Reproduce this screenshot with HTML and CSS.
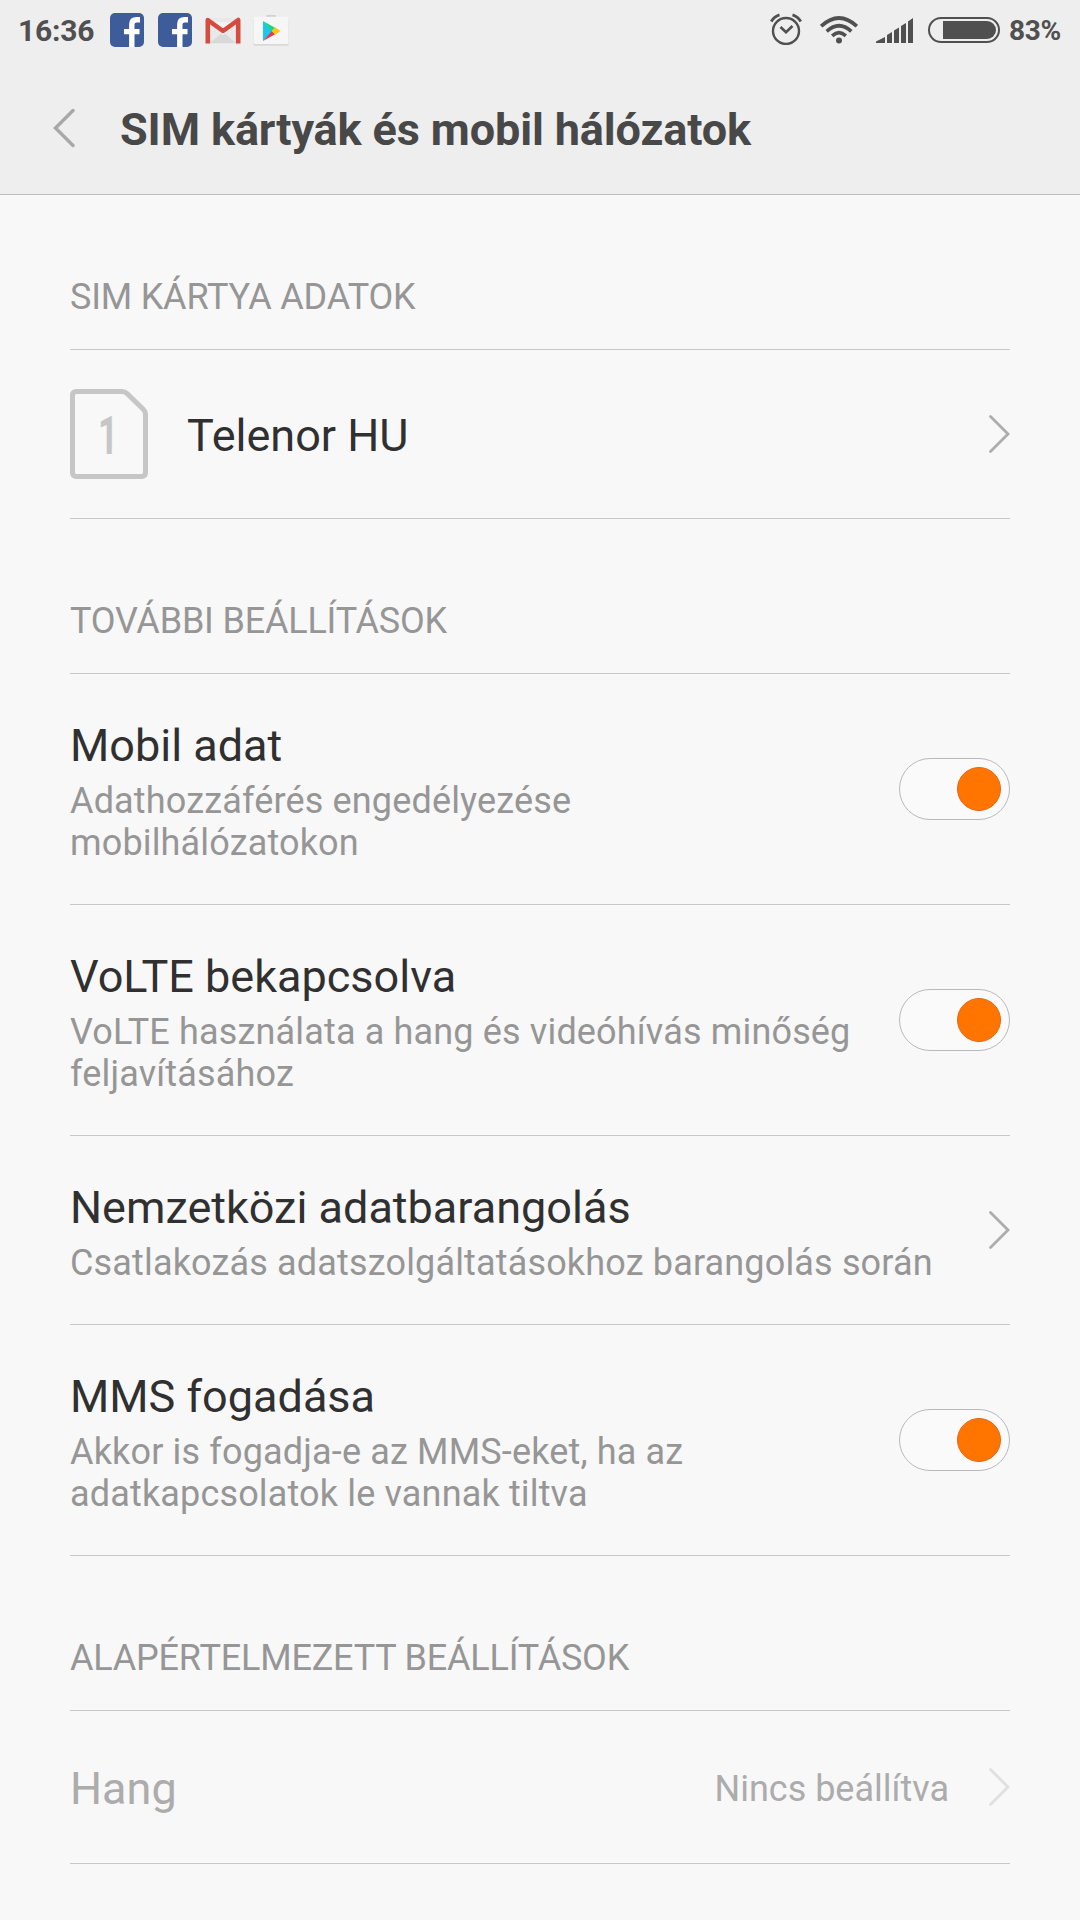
FILE: index.html
```
<!DOCTYPE html>
<html lang="hu">
<head>
    <meta charset="UTF-8">
    <meta name="viewport" content="width=device-width, initial-scale=1.0">
    <title>SIM kártyák és mobil hálózatok</title>
    <link rel="stylesheet" href="styles.css">
</head>
<body>
    <!-- shared icons -->
    <svg class="defs" width="0" height="0">
        <symbol id="arrow" viewBox="0 0 22 40">
            <path d="M2.5 2.5 L20 20 L2.5 37.5" fill="none" stroke="currentColor" stroke-width="2.8" stroke-linecap="round"/>
        </symbol>
        <symbol id="facebook" viewBox="0 0 34 34">
            <rect width="34" height="34" rx="5" fill="#3e5c9a"/>
            <path d="M21.8 34 V11.5 Q21.8 6.8 26.5 6.8 H30 M14 18.6 H29.5" fill="none" stroke="#fff" stroke-width="5.4"/>
        </symbol>
    </svg>

    <header class="header">
        <div class="status-bar">
            <span class="time">16:36</span>
            <div class="notifications">
                <svg class="fb" width="34" height="34"><use href="#facebook"/></svg>
                <svg class="fb" width="34" height="34"><use href="#facebook"/></svg>
                <svg class="gmail" width="36" height="28" viewBox="0 0 36 28">
                    <rect x="2" y="1" width="32" height="26" rx="2" fill="#e9e9e9"/>
                    <path d="M5 26 L18 15 L31 26 Z" fill="#d9d9d9"/>
                    <path d="M5 5 L18 18 L31 5 Z" fill="#f4f4f4"/>
                    <path d="M2.8 26.5 V3 L18 14 L33.2 3 V26.5" fill="none" stroke="#d54b3f" stroke-width="4.6" stroke-linejoin="round"/>
                </svg>
                <svg class="play" width="36" height="31" viewBox="0 0 36 31">
                    <path d="M14 3 V1 H22 V3" fill="none" stroke="#c8c8c8" stroke-width="1.4"/>
                    <rect x="0.5" y="3" width="35" height="27.5" rx="1.5" fill="#cfcfcf"/>
                    <rect x="0.5" y="1.8" width="35" height="27.4" rx="1.5" fill="#f6f6f6"/>
                    <path d="M10 6 V26 L20 16 Z" fill="#1cc8ea"/>
                    <path d="M10 6 L22 12.7 L19 16 Z" fill="#17d67c"/>
                    <path d="M10 26 L22 19.3 L19 16 Z" fill="#ee3250"/>
                    <path d="M22 12.2 L27.5 16 L22 19.8 L18.8 16 Z" fill="#fdc70a"/>
                </svg>
            </div>
            <div class="system">
                <svg class="alarm" width="32" height="32" viewBox="0 0 32 32" fill="none" stroke="#505050">
                    <circle cx="16" cy="18" r="13" stroke-width="2.4"/>
                    <path d="M10.5 14 L16 19.2 L22.5 13" stroke-width="2.6"/>
                    <path d="M1.2 8.5 Q4 3.5 9.5 1.8 M22.5 1.8 Q28 3.5 30.8 8.5" stroke-width="2.8"/>
                </svg>
                <svg class="wifi" width="38" height="28" viewBox="0 0 38 28" fill="none" stroke="#505050" stroke-width="3.6">
                    <path d="M1.2 10.2 Q19 -6.2 36.8 10.2"/>
                    <path d="M6.7 15.3 Q19 4.2 31.3 15.3"/>
                    <path d="M12.2 19.8 Q19 13.6 25.8 19.8"/>
                    <circle cx="19" cy="24.4" r="3" fill="#505050" stroke="none"/>
                </svg>
                <svg class="signal" width="38" height="26" viewBox="0 0 38 26" fill="#505050">
                    <path d="M0 25 V23.5 L9 19 V25 Z"/>
                    <path d="M11 25 V17 L16 14 V25 Z"/>
                    <path d="M18 25 V12.5 L23 9.5 V25 Z"/>
                    <path d="M25 25 V8 L30 5 V25 Z"/>
                    <path d="M32 25 V3.5 L37 0 V25 Z"/>
                </svg>
                <div class="battery"><div class="battery-level"></div></div>
                <span class="percent">83%</span>
            </div>
        </div>
        <div class="title-bar">
            <svg class="back" width="22" height="40" viewBox="0 0 22 40">
                <path d="M20 2.5 L2.5 20 L20 37.5" fill="none" stroke="#a8a8a8" stroke-width="3.4" stroke-linecap="round"/>
            </svg>
            <h1>SIM kártyák és mobil hálózatok</h1>
        </div>
    </header>

    <main class="content">
        <h2 class="section">SIM KÁRTYA ADATOK</h2>
        <div class="row single sim-row">
            <svg class="sim" width="78" height="90" viewBox="0 0 78 90">
                <path d="M6.5 2.5 H52 Q55 2.5 57 4.5 L73.5 20.5 Q75.5 22.5 75.5 25.5 V83.5 Q75.5 87.5 71.5 87.5 H6.5 Q2.5 87.5 2.5 83.5 V6.5 Q2.5 2.5 6.5 2.5 Z" fill="none" stroke="#c6c6c6" stroke-width="5"/>
                <text class="sim-number" transform="translate(28 65) scale(.66 1)">1</text>
            </svg>
            <div class="name">Telenor HU</div>
            <svg class="arrow" width="22" height="40"><use href="#arrow"/></svg>
        </div>

        <h2 class="section">TOVÁBBI BEÁLLÍTÁSOK</h2>
        <div class="row">
            <div class="text">
                <div class="name">Mobil adat</div>
                <div class="summary">Adathozzáférés engedélyezése<br>mobilhálózatokon</div>
            </div>
            <div class="toggle"><div class="knob"></div></div>
        </div>
        <div class="row">
            <div class="text">
                <div class="name">VoLTE bekapcsolva</div>
                <div class="summary">VoLTE használata a hang és videóhívás minőség<br>feljavításához</div>
            </div>
            <div class="toggle"><div class="knob"></div></div>
        </div>
        <div class="row">
            <div class="text">
                <div class="name">Nemzetközi adatbarangolás</div>
                <div class="summary">Csatlakozás adatszolgáltatásokhoz barangolás során</div>
            </div>
            <svg class="arrow" width="22" height="40"><use href="#arrow"/></svg>
        </div>
        <div class="row">
            <div class="text">
                <div class="name">MMS fogadása</div>
                <div class="summary">Akkor is fogadja-e az MMS-eket, ha az<br>adatkapcsolatok le vannak tiltva</div>
            </div>
            <div class="toggle"><div class="knob"></div></div>
        </div>

        <h2 class="section">ALAPÉRTELMEZETT BEÁLLÍTÁSOK</h2>
        <div class="row single disabled">
            <div class="name">Hang</div>
            <div class="value">Nincs beállítva</div>
            <svg class="arrow" width="22" height="40"><use href="#arrow"/></svg>
        </div>
    </main>
</body>
</html>
```
FILE: styles.css
```
* {
    box-sizing: border-box;
}
body {
    margin: 0;
    height: 1920px;
    background: #f8f8f8;
    font-family: Roboto, sans-serif;
    overflow: hidden;
}
.defs {
    display: block;
}
.header {
    height: 195px;
    background: #eee;
    border-bottom: 1px solid #bdbdbd;
}
.status-bar {
    display: flex;
    justify-content: space-between;
    height: 60px;
    padding: 0 19px 0 18px;
    color: #505050;
    font-weight: bold;
}
.time {
    font-size: 30px;
    line-height: 35px;
    letter-spacing: -0.2px;
    padding-top: 13px;
    width: 92px;
}
.notifications {
    display: flex;
    align-items: flex-start;
    flex: 1;
}
.fb {
    margin: 13px 14px 0 0;
}
.gmail {
    margin: 17px 12px 0 -1px;
}
.play {
    margin-top: 15px;
}
.system {
    display: flex;
    align-items: flex-start;
}
.alarm {
    margin: 13px 18px 0 0;
}
.wifi {
    margin: 16px 18px 0 0;
}
.signal {
    margin: 18px 14px 0 0;
}
.battery {
    width: 72px;
    height: 26px;
    margin: 17px 9px 0 0;
    padding: 2px 2px 2px 13px;
    border: 2px solid #505050;
    border-radius: 13px;
}
.battery-level {
    height: 18px;
    background: #505050;
    border-radius: 0 9px 9px 0;
}
.percent {
    font-size: 28px;
    line-height: 33px;
    letter-spacing: -0.3px;
    padding-top: 14px;
}
.title-bar {
    display: flex;
    align-items: center;
    height: 134px;
    padding: 2px 0 0 53px;
}
.title-bar h1 {
    margin: 3px 0 0 45px;
    font-size: 45px;
    line-height: 54px;
    letter-spacing: -0.12px;
    color: #484848;
}
.content {
    padding: 0 70px;
}
.section {
    margin: 0;
    padding: 81px 0 31px;
    border-bottom: 1px solid #c8c8c8;
    font-size: 36px;
    font-weight: normal;
    line-height: 42px;
    letter-spacing: -0.2px;
    color: #969696;
}
.row {
    display: flex;
    align-items: center;
    justify-content: space-between;
    border-bottom: 1px solid #c8c8c8;
}
.text {
    padding: 45px 0 40px;
}
.name {
    font-size: 45px;
    line-height: 54px;
    color: #303030;
}
.summary {
    margin-top: 7px;
    font-size: 36px;
    line-height: 42px;
    letter-spacing: 0.16px;
    color: #969696;
    white-space: nowrap;
}
.single {
    height: 153px;
}
.single .name {
    flex: 1;
    padding-top: 4px;
}
.sim-row {
    height: 169px;
}
.sim {
    margin-right: 39px;
}
.sim-number {
    font-size: 53px;
    font-weight: bold;
    fill: #c6c6c6;
}
.arrow {
    color: #adadad;
}
.toggle {
    width: 111px;
    height: 62px;
    padding: 8px;
    background: #fafafa;
    border: 1px solid #b9b9b9;
    border-radius: 31px;
}
.knob {
    width: 44px;
    height: 44px;
    margin-left: auto;
    background: #ff7500;
    border: 1px solid #e86613;
    border-radius: 50%;
}
.value {
    margin-right: 39px;
    padding-top: 3px;
    font-size: 36px;
    line-height: 42px;
}
.disabled .name,
.disabled .value {
    color: #acacac;
}
.disabled .arrow {
    color: #e0e0e0;
}
```
